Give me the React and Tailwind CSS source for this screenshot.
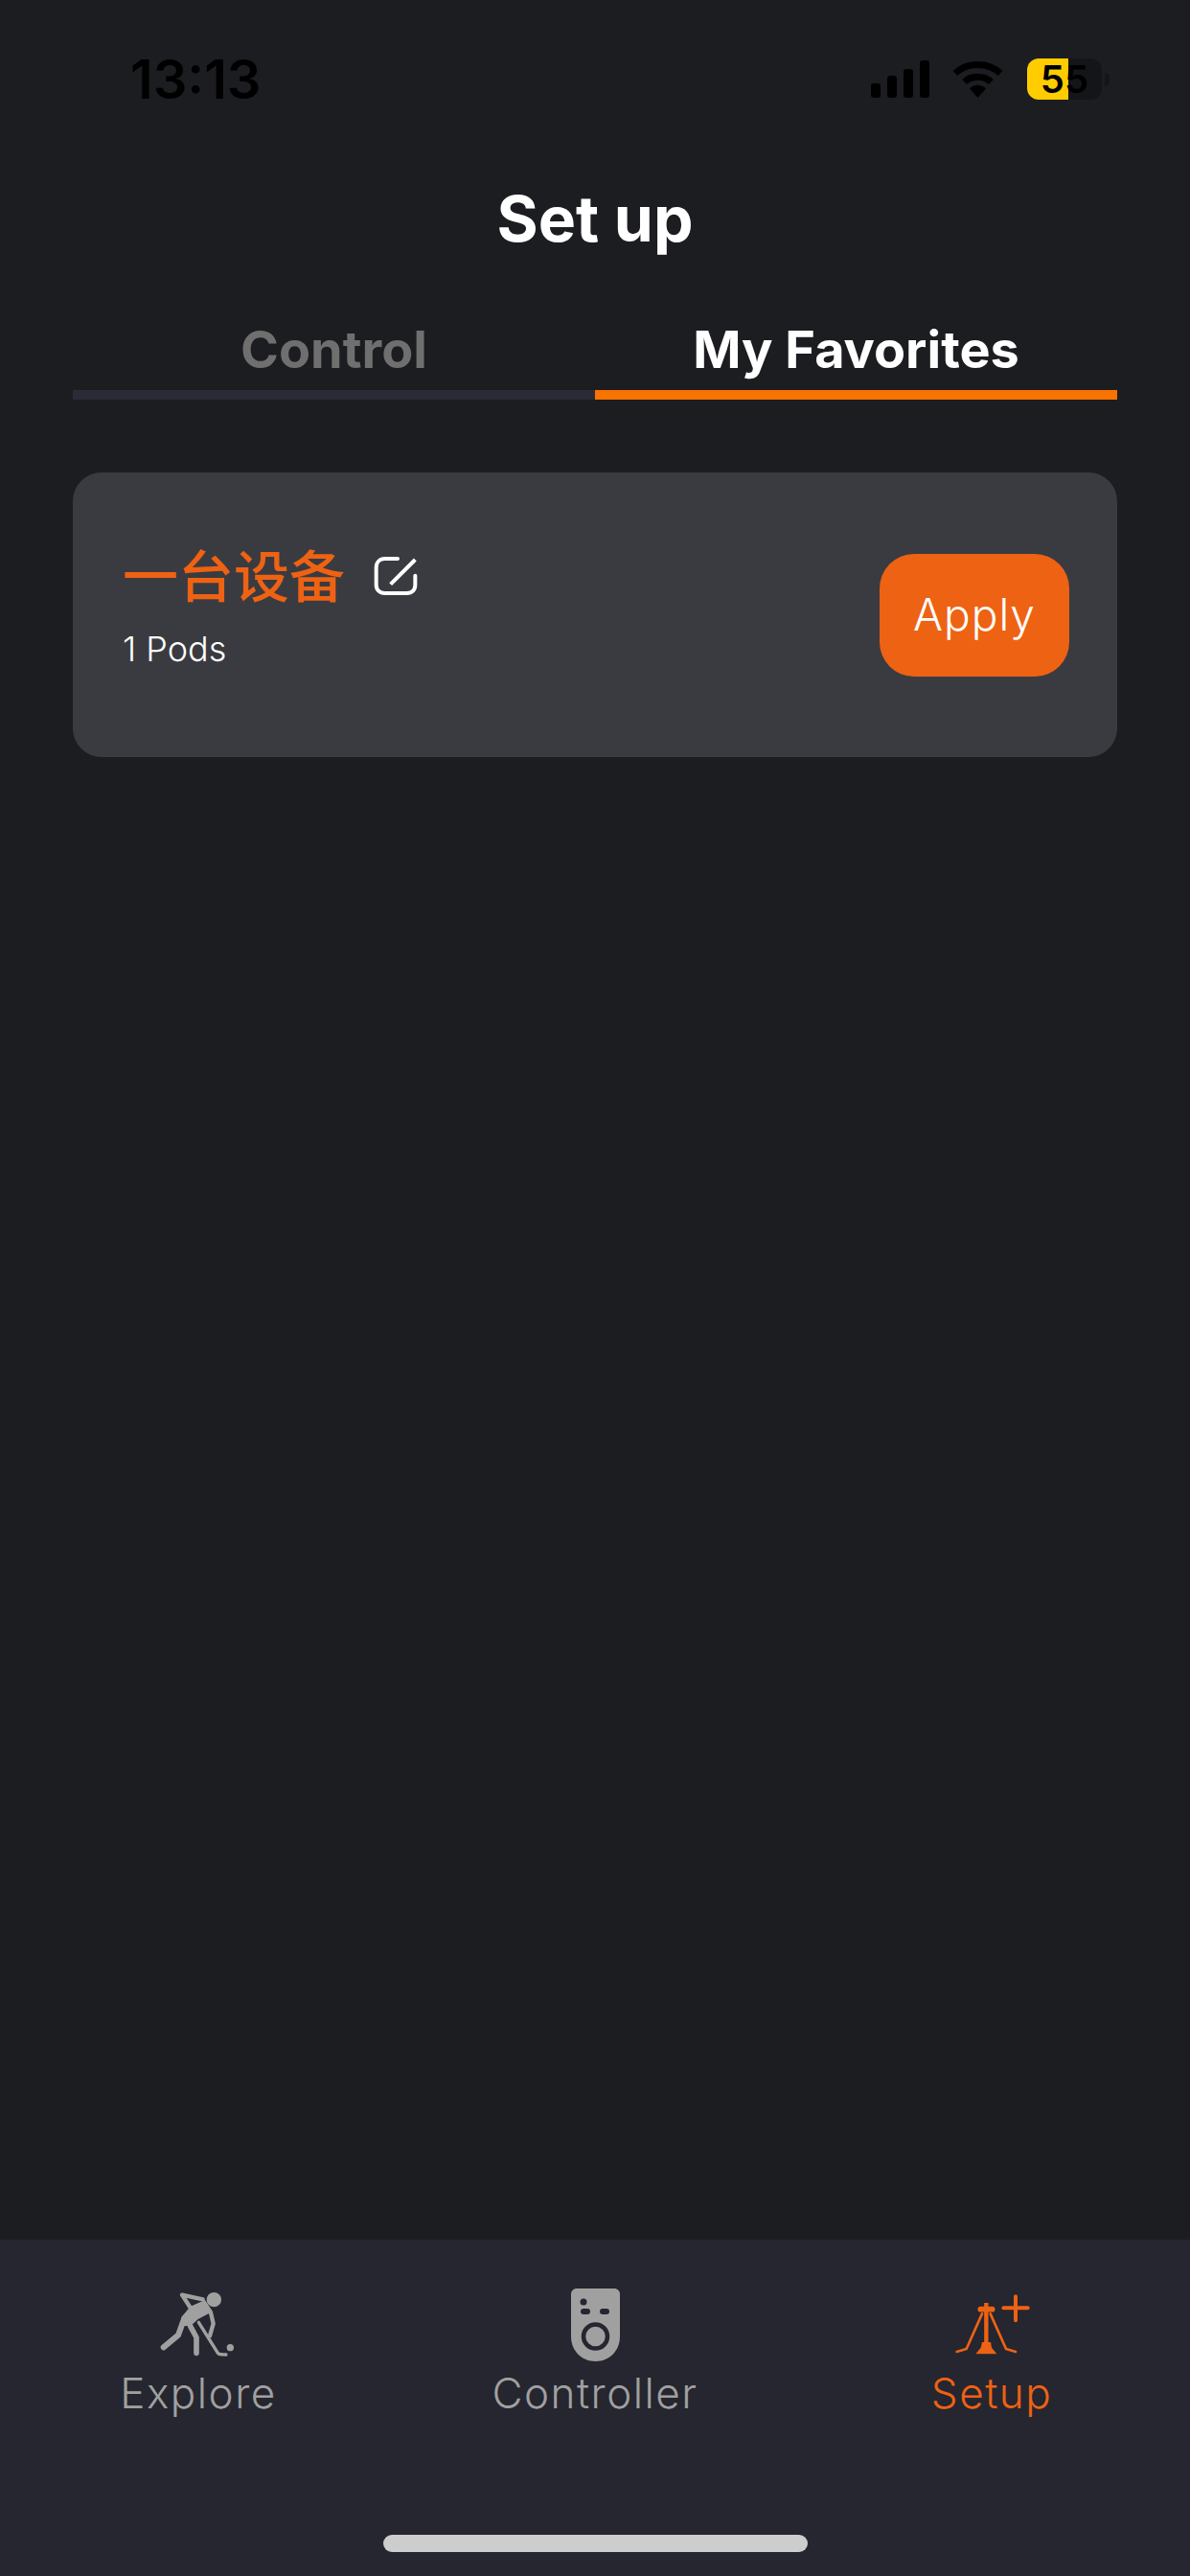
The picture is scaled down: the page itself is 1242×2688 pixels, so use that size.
const SANS = "font-['Inter','Noto_Sans_CJK_SC',sans-serif]"

function SignalIcon() {
  return (
    <svg width="61" height="39" viewBox="0 0 61 39" className="block">
      <rect x="0" y="24" width="10" height="15" rx="3" fill="#000" />
      <rect x="17" y="16" width="10" height="23" rx="3" fill="#000" />
      <rect x="34" y="9" width="10" height="30" rx="3" fill="#000" />
      <rect x="51" y="0" width="10" height="39" rx="3" fill="#000" />
    </svg>
  )
}

function WifiIcon() {
  return (
    <svg width="53" height="39" viewBox="0 0 53 39" fill="none" className="block">
      <path d="M3 13.5C16 1.5 37 1.5 50 13.5" stroke="#000" strokeWidth="7" />
      <path d="M12.5 22.5C20 15.5 33 15.5 40.5 22.5" stroke="#000" strokeWidth="7" />
      <path d="M18 29.5C23 24.5 30 24.5 35 29.5L26.5 39Z" fill="#000" />
    </svg>
  )
}

function Battery() {
  return (
    <div className="flex items-center gap-[3px]">
      <div className="relative w-[78px] h-[43px] rounded-[12px] bg-[#141518] flex items-center justify-center">
        <div className="absolute inset-y-0 left-0 w-[43px] rounded-l-[12px] bg-[#ffcc00]" />
        <span className="relative text-[40px] leading-none font-semibold text-black">55</span>
      </div>
      <div className="w-[5px] h-[14px] rounded-r-full bg-[#141518]" />
    </div>
  )
}

function EditIcon() {
  return (
    <svg width="70" height="65" viewBox="0 0 210 195" fill="none" className="block">
      <path d="M105 42H65C49 42 38 53 38 70V124C38 140 49 150 65 150H134C150 150 160 140 160 124V95" stroke="#fff" strokeWidth="12" strokeLinecap="round" />
      <path d="M83 122L160 45" stroke="#fff" strokeWidth="12" />
    </svg>
  )
}

function HockeyIcon() {
  return (
    <svg width="90" height="80" viewBox="0 0 270 240" fill="none" className="block -translate-x-[2px]">
      <circle cx="190" cy="47" r="23" fill="#a0a0a0" />
      <circle cx="241" cy="197" r="11" fill="#a0a0a0" />
      {/* raised arm */}
      <path d="M90 32L155 46M90 32L116 72" stroke="#a0a0a0" strokeWidth="13" strokeLinecap="round" />
      {/* torso */}
      <path d="M116 68L162 48L186 84L140 108L118 128L92 130L88 102Z" fill="#a0a0a0" />
      {/* back leg, front leg and lower arm */}
      <path d="M97 105L78 158L32 196" stroke="#a0a0a0" strokeWidth="18" strokeLinecap="round" strokeLinejoin="round" />
      <path d="M116 130L135 165V214" stroke="#a0a0a0" strokeWidth="17" strokeLinecap="round" strokeLinejoin="round" />
      <path d="M180 88L188 122L177 160" stroke="#a0a0a0" strokeWidth="13" strokeLinecap="round" strokeLinejoin="round" />
      {/* stick */}
      <path d="M142 118L202 214C204 218 208 219 228 219" stroke="#a0a0a0" strokeWidth="10" strokeLinecap="round" />
    </svg>
  )
}

function RemoteIcon() {
  return (
    <svg width="51" height="76" viewBox="0 0 51 76" fill="none" className="block">
      <path d="M6 0H45C48.5 0 51 2.5 51 6V50C51 65 40 76 25.5 76C11 76 0 65 0 50V6C0 2.5 2.5 0 6 0Z" fill="#a0a0a0" />
      <circle cx="13" cy="14" r="3.5" fill="#25262f" />
      <rect x="10" y="21" width="10" height="6" rx="3" fill="#25262f" />
      <rect x="30" y="21" width="10" height="6" rx="3" fill="#25262f" />
      <circle cx="25.5" cy="50" r="12.5" stroke="#25262f" strokeWidth="4.5" />
    </svg>
  )
}

function TripodPlusIcon() {
  return (
    <svg width="90" height="75" viewBox="0 0 270 225" fill="none" className="block">
      <path d="M210 22V97M172 58H248" stroke="#ee6213" strokeWidth="12" strokeLinecap="round" />
      <path d="M118 42V170" stroke="#ee6213" strokeWidth="13" />
      <path d="M100 62H137" stroke="#ee6213" strokeWidth="17" strokeLinecap="round" />
      <path d="M105 76L56 186L26 195M131 76L180 186L210 195" stroke="#ee6213" strokeWidth="8" strokeLinecap="round" strokeLinejoin="round" />
      <path d="M105 165H132L135 182L151 202H85L101 182Z" fill="#ee6213" />
    </svg>
  )
}

const NAV_ITEMS = [
  { label: 'Explore', Icon: HockeyIcon, color: 'text-[#a0a0a0]' },
  { label: 'Controller', Icon: RemoteIcon, color: 'text-[#a0a0a0]' },
  { label: 'Setup', Icon: TripodPlusIcon, color: 'text-[#ee6213]' },
]

export default function App() {
  return (
    <div className={`w-[1242px] h-[2688px] bg-[#1c1d21] flex flex-col ${SANS}`}>
      {/* Status bar */}
      <div className="flex items-center justify-between h-[43px] mt-[61px] pl-[136px] pr-[84px]">
        <span className="text-[56px] leading-none font-semibold text-black">13:13</span>
        <div className="flex items-center">
          <SignalIcon />
          <div className="ml-[24px] mr-[25px]"><WifiIcon /></div>
          <Battery />
        </div>
      </div>

      <h1 className="mt-[89px] text-center text-[66px] leading-[70px] font-bold text-white">Set up</h1>

      {/* Tabs */}
      <div className="mt-[72px] mx-[76px] grid grid-cols-2">
        <div className="border-b-[10px] border-[#2b2b38] text-center text-[54px] leading-[60px] pb-[12px] font-bold text-[#6f6f6f]">Control</div>
        <div className="border-b-[10px] border-[#f97300] text-center text-[54px] leading-[60px] pb-[12px] font-bold text-white">My Favorites</div>
      </div>

      {/* Favorite card */}
      <div className="mt-[76px] mx-[76px] h-[297px] rounded-[30px] bg-[#3a3b40] flex items-center justify-between pl-[52px] pr-[50px]">
        <div className="-mt-[18px]">
          <div className="flex items-center gap-[20px]">
            <span className="text-[58px] leading-[70px] font-medium text-[#ee6213]">一台设备</span>
            <EditIcon />
          </div>
          <p className="mt-[18px] text-[36px] leading-[44px] font-light text-white">1 Pods</p>
        </div>
        <button className="w-[198px] h-[128px] rounded-[36px] bg-[#ee6213] text-[46px] font-light tracking-[1px] text-white">Apply</button>
      </div>

      {/* Bottom tab bar */}
      <nav className="mt-auto h-[351px] bg-[#25262f] flex flex-col items-center">
        <div className="w-full grid grid-cols-3 mt-[51px] h-[120px]">
          {NAV_ITEMS.map(({ label, Icon, color }) => (
            <div key={label} className="flex flex-col items-center">
              <div className="h-[76px] flex items-end"><Icon /></div>
              <span className={`mt-[8px] text-[44px] leading-[50px] font-light tracking-[1.5px] ${color}`}>{label}</span>
            </div>
          ))}
        </div>
        <div className="mt-[137px] w-[443px] h-[18px] rounded-full bg-[#cdcdcd]" />
      </nav>
    </div>
  )
}
